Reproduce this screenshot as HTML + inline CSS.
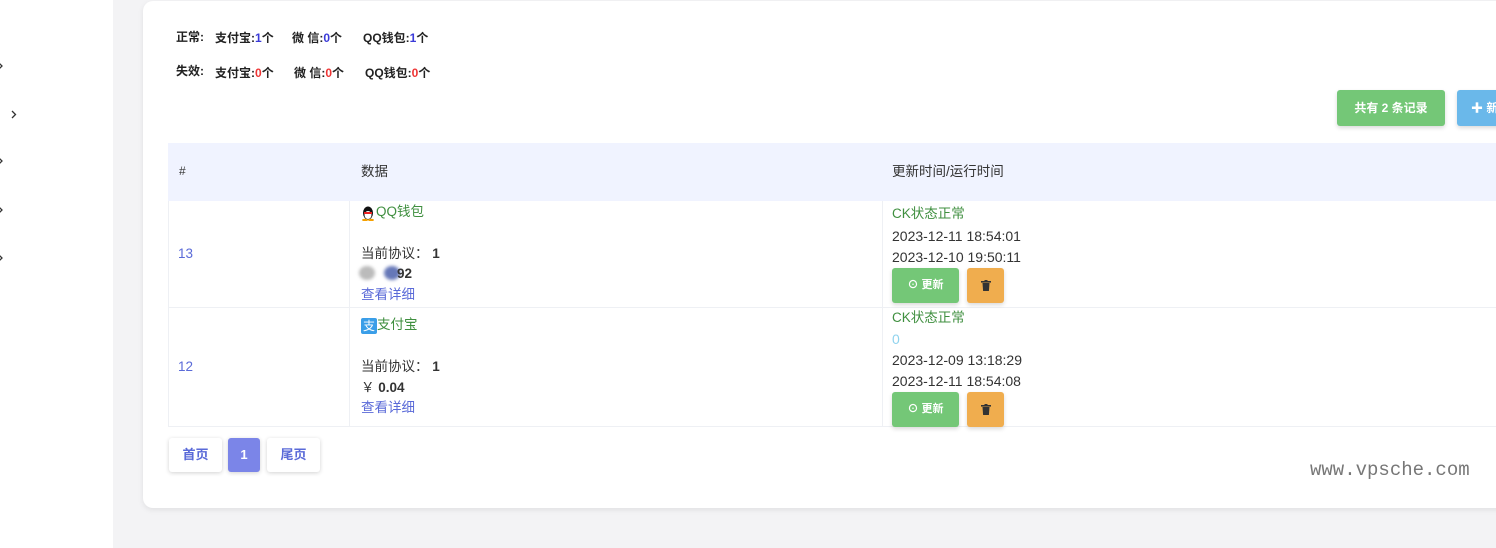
<!DOCTYPE html>
<html><head><meta charset="utf-8"><style>
*{margin:0;padding:0;box-sizing:border-box}
body{width:1496px;height:548px;overflow:hidden;background:#f3f3f5;font-family:"Liberation Sans","Noto Sans CJK SC",sans-serif;position:relative;color:#333}
.side{position:absolute;left:0;top:0;width:113px;height:548px;background:#fff}
.chev{position:absolute}
.card{position:absolute;left:143px;top:1px;width:1380px;height:507px;background:#fff;border-radius:10px;box-shadow:0 2px 6px rgba(0,0,0,.08)}
.a{position:absolute;white-space:nowrap;line-height:1.2}
.s{font-size:12px;font-weight:bold;color:#222}
.b{color:#3a3ad8}.r{color:#e33}
.btn{position:absolute;border-radius:3px;color:#fff;font-size:12px;font-weight:bold;text-align:center;box-shadow:0 2px 4px rgba(0,0,0,.15)}
.hdr{position:absolute;left:168px;top:143px;width:1340px;height:58px;background:#f0f3ff}
.line{position:absolute;background:#eef0f4}
.t{font-size:13.5px;color:#333}
.d{font-size:14px;color:#333}
.g{color:#3f8f3f;font-size:13.5px}
.lk{color:#5a6ad8;font-size:13.5px}
.pg{position:absolute;top:438px;height:34px;background:#fff;border-radius:3px;box-shadow:0 1px 4px rgba(0,0,0,.18);font-size:13px;font-weight:bold;color:#5a6ad8;text-align:center;line-height:34px}
</style></head><body>
<div class="side">
<svg class="chev" style="left:0;top:62px" width="4" height="8"><path d="M-1 1l3 3-3 3" stroke="#333" stroke-width="1.3" fill="none"/></svg>
<svg class="chev" style="left:11px;top:110px" width="6" height="9"><path d="M1 1l3.5 3.5L1 8" stroke="#333" stroke-width="1.3" fill="none"/></svg>
<svg class="chev" style="left:0;top:157px" width="4" height="8"><path d="M-1 1l3 3-3 3" stroke="#333" stroke-width="1.3" fill="none"/></svg>
<svg class="chev" style="left:0;top:206px" width="4" height="8"><path d="M-1 1l3 3-3 3" stroke="#333" stroke-width="1.3" fill="none"/></svg>
<svg class="chev" style="left:0;top:254px" width="4" height="8"><path d="M-1 1l3 3-3 3" stroke="#333" stroke-width="1.3" fill="none"/></svg>
</div>
<div class="card"></div>
<div class="a s" style="left:176px;top:30px">正常:</div>
<div class="a s" style="left:215px;top:31px">支付宝:<span class="b">1</span>个</div>
<div class="a s" style="left:292px;top:31px">微 信:<span class="b">0</span>个</div>
<div class="a s" style="left:363px;top:31px">QQ钱包:<span class="b">1</span>个</div>
<div class="a s" style="left:176px;top:64px">失效:</div>
<div class="a s" style="left:215px;top:66px">支付宝:<span class="r">0</span>个</div>
<div class="a s" style="left:294px;top:66px">微 信:<span class="r">0</span>个</div>
<div class="a s" style="left:365px;top:66px">QQ钱包:<span class="r">0</span>个</div>
<div class="btn" style="left:1337px;top:90px;width:108px;height:36px;line-height:36px;background:#74c777">共有 2 条记录</div>
<div class="btn" style="left:1457px;top:90px;width:60px;height:36px;line-height:36px;background:#6ab8ea;text-align:left;padding-left:14px">✚ 新增</div>
<div class="hdr"></div>
<div class="a t" style="left:179px;top:164px;font-size:12px">#</div>
<div class="a t" style="left:361px;top:164px">数据</div>
<div class="a t" style="left:892px;top:164px">更新时间/运行时间</div>
<div class="line" style="left:168px;top:201px;width:1px;height:226px"></div>
<div class="line" style="left:349px;top:201px;width:1px;height:226px"></div>
<div class="line" style="left:882px;top:201px;width:1px;height:226px"></div>
<div class="line" style="left:168px;top:307px;width:1340px;height:1px"></div>
<div class="line" style="left:168px;top:426px;width:1340px;height:1px"></div>
<!-- row 1 -->
<div class="a lk" style="left:178px;top:246px">13</div>
<div class="a" style="left:361px;top:206px;width:14px;height:15px"><svg width="14" height="15"><ellipse cx="7" cy="7" rx="5" ry="6.5" fill="#111"/><ellipse cx="7" cy="9" rx="3.5" ry="4" fill="#fff"/><rect x="3" y="6" width="8" height="2" fill="#e22"/><ellipse cx="4" cy="14" rx="3" ry="1.3" fill="#f5a000"/><ellipse cx="10" cy="14" rx="3" ry="1.3" fill="#f5a000"/></svg></div>
<div class="a g" style="left:376px;top:204px">QQ钱包</div>
<div class="a t" style="left:361px;top:246px">当前协议： <b>1</b></div>
<div class="a" style="left:359px;top:266px;width:16px;height:14px;background:#bbb;border-radius:50%;filter:blur(1.5px)"></div>
<div class="a" style="left:384px;top:266px;width:16px;height:14px;background:#6678b8;border-radius:50%;filter:blur(1.5px)"></div>
<div class="a t" style="left:397px;top:266px;font-weight:bold">92</div>
<div class="a lk" style="left:361px;top:287px">查看详细</div>
<div class="a g" style="left:892px;top:206px">CK状态正常</div>
<div class="a d" style="left:892px;top:228px">2023-12-11 18:54:01</div>
<div class="a d" style="left:892px;top:249px">2023-12-10 19:50:11</div>
<div class="btn" style="left:892px;top:268px;width:67px;height:35px;line-height:35px;background:#74c777;font-size:11px">⊙ 更新</div>
<div class="btn" style="left:967px;top:268px;width:37px;height:35px;background:#f0ad4e"><svg width="10" height="11" style="margin-top:12px"><rect x="0" y="1" width="10" height="1.6" fill="#333"/><rect x="3.5" y="0" width="3" height="1.5" fill="#333"/><path d="M1.5 3h7l-.6 8h-5.8z" fill="#333"/></svg></div>
<!-- row 2 -->
<div class="a lk" style="left:178px;top:359px">12</div>
<div class="a" style="left:361px;top:318px;width:16px;height:16px;background:#3a9ee8;border-radius:2px;color:#fff;font-size:12px;line-height:16px;text-align:center">支</div>
<div class="a g" style="left:377px;top:317px">支付宝</div>
<div class="a t" style="left:361px;top:359px">当前协议： <b>1</b></div>
<div class="a t" style="left:361px;top:380px">￥ <b>0.04</b></div>
<div class="a lk" style="left:361px;top:400px">查看详细</div>
<div class="a g" style="left:892px;top:310px">CK状态正常</div>
<div class="a d" style="left:892px;top:331px;color:#8fd3ee">0</div>
<div class="a d" style="left:892px;top:352px">2023-12-09 13:18:29</div>
<div class="a d" style="left:892px;top:373px">2023-12-11 18:54:08</div>
<div class="btn" style="left:892px;top:392px;width:67px;height:35px;line-height:35px;background:#74c777;font-size:11px">⊙ 更新</div>
<div class="btn" style="left:967px;top:392px;width:37px;height:35px;background:#f0ad4e"><svg width="10" height="11" style="margin-top:12px"><rect x="0" y="1" width="10" height="1.6" fill="#333"/><rect x="3.5" y="0" width="3" height="1.5" fill="#333"/><path d="M1.5 3h7l-.6 8h-5.8z" fill="#333"/></svg></div>
<!-- pagination -->
<div class="pg" style="left:169px;width:53px">首页</div>
<div class="pg" style="left:228px;width:32px;background:#7b85e8;color:#fff">1</div>
<div class="pg" style="left:267px;width:53px">尾页</div>
<div class="a" style="left:1310px;top:459px;font-family:'Liberation Mono',monospace;font-size:19px;color:#777">www.vpsche.com</div>
</body></html>
